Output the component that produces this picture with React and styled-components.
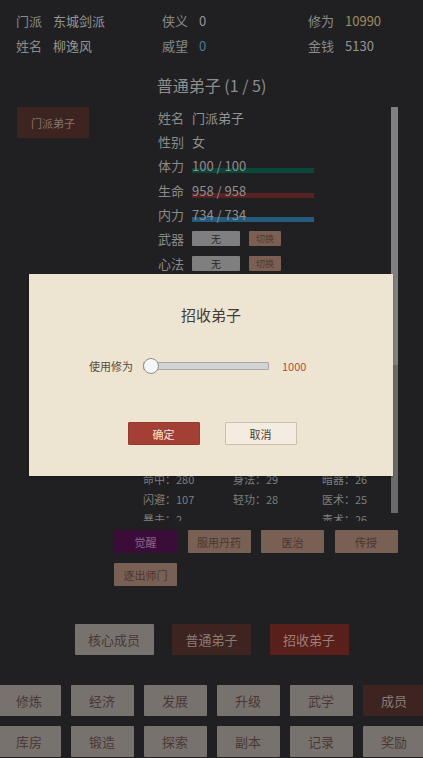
import React from "react";
import styled, { createGlobalStyle } from "styled-components";

const GlobalStyle = createGlobalStyle`
  html, body {
    margin: 0;
    padding: 0;
    background: #202022;
    font-family: "Noto Sans CJK SC", "Noto Sans", sans-serif;
    overflow: hidden;
  }
`;

const Page = styled.div`
  width: 423px;
  height: 758px;
  overflow: hidden;
  position: relative;
  background: #202022;
  color: #8c8c8c;
`;

const Header = styled.div`
  display: grid;
  grid-template-columns: 146px 146px 1fr;
  padding: 8px 0 0 16px;
  font-size: 13px;
  line-height: 25px;
`;

const InfoItem = styled.div`
  display: flex;
  white-space: nowrap;
`;

const InfoLabel = styled.span`
  width: 37px;
  color: #8a8a8a;
`;

const InfoValue = styled.span`
  color: ${(p) => p.color || "#959595"};
`;

const Title = styled.div`
  margin-top: 15px;
  text-align: center;
  font-size: 16px;
  line-height: 24px;
  color: #8e8e8e;
`;

const Main = styled.div`
  display: flex;
  margin-top: 10px;
`;

const LeftCol = styled.div`
  width: 140px;
  padding-left: 17px;
  box-sizing: border-box;
`;

const MemberButton = styled.div`
  width: 72px;
  height: 31px;
  background: #3e2420;
  color: #857470;
  font-size: 11px;
  display: flex;
  align-items: center;
  justify-content: center;
  border-radius: 1px;
`;

const RightCol = styled.div`
  width: 258px;
`;

const PanelWrap = styled.div`
  display: flex;
  height: 414px;
`;

const Panel = styled.div`
  width: 251px;
  height: 414px;
  overflow: hidden;
`;

const ScrollTrack = styled.div`
  width: 7px;
  height: 406px;
  background: #6a6a6c;
  display: flex;
  flex-direction: column;
`;

const ScrollThumb = styled.div`
  height: 258px;
  background: #808080;
`;

const Details = styled.div`
  padding-left: 18px;
  margin-top: -2px;
`;

const DetailRow = styled.div`
  height: 24.33px;
  display: flex;
  align-items: center;
  font-size: 13px;
`;

const DetailLabel = styled.span`
  width: 34px;
  color: #8a8a8a;
`;

const DetailValue = styled.span`
  color: #939393;
`;

const BarValue = styled.div`
  position: relative;
  width: 122px;
  color: #8e8e8e;
`;

const BarText = styled.span`
  position: relative;
  z-index: 1;
`;

const Bar = styled.div`
  position: absolute;
  left: 0;
  right: 0;
  bottom: 2px;
  height: 5px;
  background: ${(p) => p.color};
`;

const EquipBox = styled.div`
  width: 48px;
  height: 15px;
  background: #7f7f7f;
  color: #2a2a2a;
  font-size: 10px;
  display: flex;
  align-items: center;
  justify-content: center;
  border-radius: 1px;
`;

const SwapButton = styled.div`
  margin-left: 9px;
  width: 32px;
  height: 15px;
  background: #7a5f52;
  color: #4c3a33;
  font-size: 9px;
  display: flex;
  align-items: center;
  justify-content: center;
  border-radius: 1px;
`;

const Stats = styled.div`
  margin-top: 34px;
  padding-left: 3px;
  display: grid;
  grid-template-columns: 90px 89px 1fr;
  grid-auto-rows: 20px;
  align-items: center;
  font-size: 11px;
  color: #7e7e7e;
`;

const Actions = styled.div`
  display: flex;
  flex-wrap: wrap;
  gap: 10px 10.5px;
  margin-top: 9px;
  margin-left: -26px;
  width: 290px;
`;

const ActionButton = styled.div`
  width: 63px;
  height: 23px;
  background: ${(p) => (p.purple ? "#3a0c38" : "#786055")};
  color: ${(p) => (p.purple ? "#8a6488" : "#4a3630")};
  font-size: 11px;
  display: flex;
  align-items: center;
  justify-content: center;
  border-radius: 1px;
`;

const Tabs = styled.div`
  display: flex;
  justify-content: center;
  gap: 18.5px;
  margin-top: 38px;
`;

const Tab = styled.div`
  width: 79px;
  height: 31px;
  background: ${(p) => p.bg};
  color: ${(p) => p.fg};
  font-size: 13px;
  display: flex;
  align-items: center;
  justify-content: center;
  border-radius: 1px;
`;

const Nav = styled.div`
  margin-top: 30px;
  display: grid;
  grid-template-columns: repeat(6, 63px);
  grid-auto-rows: 31px;
  gap: 10px;
  justify-content: center;
  margin-left: -3px;
  margin-right: -3px;
`;

const NavButton = styled.div`
  background: ${(p) => (p.active ? "#3e2420" : "#77726e")};
  color: ${(p) => (p.active ? "#8a7b77" : "#4b3835")};
  font-size: 13px;
  display: flex;
  align-items: center;
  justify-content: center;
  border-radius: 1px;
`;

const Overlay = styled.div`
  position: absolute;
  inset: 0;
  display: flex;
  align-items: flex-start;
  justify-content: center;
`;

const Modal = styled.div`
  margin-top: 274px;
  width: 364px;
  height: 202px;
  margin-left: -1px;
  background: #ede5d2;
  display: flex;
  flex-direction: column;
  align-items: center;
  box-shadow: 0 1px 2px rgba(0, 0, 0, 0.3);
`;

const ModalTitle = styled.div`
  margin-top: 30px;
  font-size: 15px;
  line-height: 22px;
  color: #453c35;
`;

const SliderRow = styled.div`
  margin-top: 30px;
  display: flex;
  align-items: center;
  width: 100%;
  padding-left: 60px;
  box-sizing: border-box;
  height: 20px;
`;

const SliderLabel = styled.span`
  font-size: 11px;
  color: #574b42;
  width: 54px;
`;

const SliderTrack = styled.div`
  position: relative;
  width: 124px;
  height: 6px;
  background: #d3d3d3;
  border: 1px solid #a9a9a9;
  border-radius: 1px;
`;

const SliderThumb = styled.div`
  position: absolute;
  left: -1px;
  top: 50%;
  width: 14px;
  height: 14px;
  margin-top: -8px;
  border-radius: 50%;
  background: #f6f6f6;
  border: 1px solid #8e8e8e;
`;

const SliderValue = styled.span`
  margin-left: 13px;
  font-size: 11px;
  color: #b84a3c;
`;

const ModalButtons = styled.div`
  margin-top: 46px;
  display: flex;
  gap: 25px;
  margin-left: 2px;
`;

const ModalButton = styled.div`
  width: 72px;
  height: 23px;
  box-sizing: border-box;
  display: flex;
  align-items: center;
  justify-content: center;
  font-size: 11px;
  border-radius: 1px;
  background: ${(p) => (p.primary ? "#a33f35" : "#f4ece0")};
  color: ${(p) => (p.primary ? "#f3e4dc" : "#4a4038")};
  border: 1px solid ${(p) => (p.primary ? "#963a31" : "#c9c0b3")};
`;

const stats = [
  ["攻击：312", "防御：148", "速度：35"],
  ["拳掌：30", "剑法：41", "刀法：22"],
  ["棍法：18", "奇门：20", "御剑：24"],
  ["锻造：17", "炼丹：19", "采集：21"],
  ["悟性：66", "根骨：58", "福缘：42"],
  ["臂力：40", "定力：37", "洞察：33"],
  ["招架：61", "反击：12", "格挡：45"],
  ["破甲：9", "护体：31", "吸血：0"],
  ["命中：280", "身法：29", "暗器：26"],
  ["闪避：107", "轻功：28", "医术：25"],
  ["暴击：2", "", "毒术：26"],
];

export default function App() {
  return (
    <Page>
      <GlobalStyle />
      <Header>
        <InfoItem>
          <InfoLabel>门派</InfoLabel>
          <InfoValue>东城剑派</InfoValue>
        </InfoItem>
        <InfoItem>
          <InfoLabel>侠义</InfoLabel>
          <InfoValue>0</InfoValue>
        </InfoItem>
        <InfoItem>
          <InfoLabel>修为</InfoLabel>
          <InfoValue color="#a08a5e">10990</InfoValue>
        </InfoItem>
        <InfoItem>
          <InfoLabel>姓名</InfoLabel>
          <InfoValue>柳逸风</InfoValue>
        </InfoItem>
        <InfoItem>
          <InfoLabel>威望</InfoLabel>
          <InfoValue color="#527a94">0</InfoValue>
        </InfoItem>
        <InfoItem>
          <InfoLabel>金钱</InfoLabel>
          <InfoValue>5130</InfoValue>
        </InfoItem>
      </Header>

      <Title>普通弟子 (1 / 5)</Title>

      <Main>
        <LeftCol>
          <MemberButton>门派弟子</MemberButton>
        </LeftCol>
        <RightCol>
          <PanelWrap>
            <Panel>
              <Details>
                <DetailRow>
                  <DetailLabel>姓名</DetailLabel>
                  <DetailValue>门派弟子</DetailValue>
                </DetailRow>
                <DetailRow>
                  <DetailLabel>性别</DetailLabel>
                  <DetailValue>女</DetailValue>
                </DetailRow>
                <DetailRow>
                  <DetailLabel>体力</DetailLabel>
                  <BarValue>
                    <Bar color="#0b463a" />
                    <BarText>100 / 100</BarText>
                  </BarValue>
                </DetailRow>
                <DetailRow>
                  <DetailLabel>生命</DetailLabel>
                  <BarValue>
                    <Bar color="#572221" />
                    <BarText>958 / 958</BarText>
                  </BarValue>
                </DetailRow>
                <DetailRow>
                  <DetailLabel>内力</DetailLabel>
                  <BarValue>
                    <Bar color="#245b7e" />
                    <BarText>734 / 734</BarText>
                  </BarValue>
                </DetailRow>
                <DetailRow>
                  <DetailLabel>武器</DetailLabel>
                  <EquipBox>无</EquipBox>
                  <SwapButton>切换</SwapButton>
                </DetailRow>
                <DetailRow>
                  <DetailLabel>心法</DetailLabel>
                  <EquipBox>无</EquipBox>
                  <SwapButton>切换</SwapButton>
                </DetailRow>
              </Details>
              <Stats>
                {stats.flat().map((s, i) => (
                  <span key={i}>{s}</span>
                ))}
              </Stats>
            </Panel>
            <ScrollTrack>
              <ScrollThumb />
            </ScrollTrack>
          </PanelWrap>
          <Actions>
            <ActionButton purple>觉醒</ActionButton>
            <ActionButton>服用丹药</ActionButton>
            <ActionButton>医治</ActionButton>
            <ActionButton>传授</ActionButton>
            <ActionButton>逐出师门</ActionButton>
          </Actions>
        </RightCol>
      </Main>

      <Tabs>
        <Tab bg="#77726e" fg="#4b3835">核心成员</Tab>
        <Tab bg="#3e2420" fg="#8a7b77">普通弟子</Tab>
        <Tab bg="#591f1b" fg="#9c7e78">招收弟子</Tab>
      </Tabs>

      <Nav>
        <NavButton>修炼</NavButton>
        <NavButton>经济</NavButton>
        <NavButton>发展</NavButton>
        <NavButton>升级</NavButton>
        <NavButton>武学</NavButton>
        <NavButton active>成员</NavButton>
        <NavButton>库房</NavButton>
        <NavButton>锻造</NavButton>
        <NavButton>探索</NavButton>
        <NavButton>副本</NavButton>
        <NavButton>记录</NavButton>
        <NavButton>奖励</NavButton>
      </Nav>

      <Overlay>
        <Modal>
          <ModalTitle>招收弟子</ModalTitle>
          <SliderRow>
            <SliderLabel>使用修为</SliderLabel>
            <SliderTrack>
              <SliderThumb />
            </SliderTrack>
            <SliderValue>1000</SliderValue>
          </SliderRow>
          <ModalButtons>
            <ModalButton primary>确定</ModalButton>
            <ModalButton>取消</ModalButton>
          </ModalButtons>
        </Modal>
      </Overlay>
    </Page>
  );
}
